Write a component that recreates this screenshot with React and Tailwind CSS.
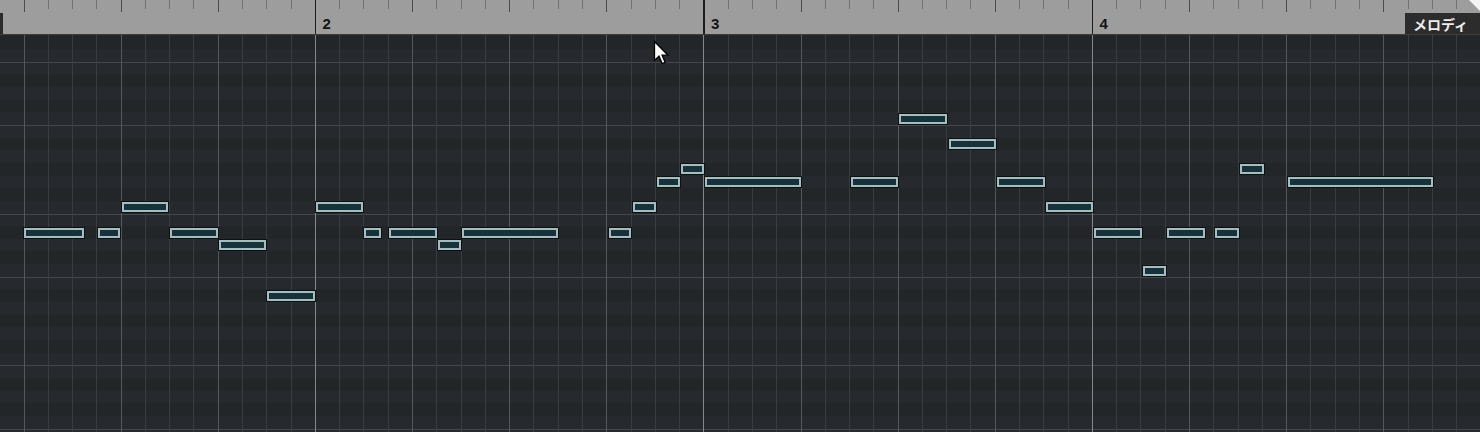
import React from "react";

const ROW = 12.667;
const FIRST = -13;
const COLS = 62;

// [start x, end x, row] — row 18 is C
const notes = [
  [24.3, 84, 15],
  [97.7, 120.3, 15],
  [122.3, 168.3, 13],
  [170, 218.3, 15],
  [219, 266, 16],
  [267.3, 315, 20],
  [316, 363, 13],
  [364, 380.5, 15],
  [389, 436.5, 15],
  [438, 460.5, 16],
  [462, 557.5, 15],
  [609, 631, 15],
  [633, 655.5, 13],
  [657, 679.5, 11],
  [681, 703.5, 10],
  [705, 800.5, 11],
  [851, 898, 11],
  [899, 946.5, 6],
  [949, 995.5, 8],
  [997, 1044.5, 11],
  [1046, 1093, 13],
  [1094, 1141.5, 15],
  [1143, 1166, 18],
  [1167, 1204.5, 15],
  [1215, 1238.5, 15],
  [1240, 1263.5, 10],
  [1288, 1433, 11],
];

const blackPitch = [1, 3, 6, 8, 10];
const octaveLines = [2, 7, 14, 19, 26, 31];
const cols = Array.from({ length: COLS }, (_, k) => k + FIRST);
const mod16 = (i) => ((i % 16) + 16) % 16;

function Ruler() {
  return (
    <div className="relative h-[35px] shrink-0 overflow-hidden border-b border-[#3c3c3c] bg-[#9d9d9d]">
      <div className="absolute inset-y-0 left-[-0.77px] flex">
        {cols.map((i) => {
          const m = mod16(i);
          if (m === 0) {
            return (
              <div key={i} className="flex w-[24.29px] shrink-0 items-start">
                <div className="h-[34px] w-[1.5px] shrink-0 bg-[#1b1b1b]" />
                <span className="ml-[6px] mt-[15px] text-[15px] font-bold leading-[17px] text-[#141414] [font-family:'Liberation_Sans',Arial,sans-serif]">
                  {i / 16 + 2}
                </span>
              </div>
            );
          }
          return (
            <div key={i} className="w-[24.29px] shrink-0">
              <div className={m % 4 === 0 ? "h-[12px] w-px bg-[#4c4c4c]" : "h-[9px] w-px bg-[#727272]"} />
            </div>
          );
        })}
      </div>
      <div className="absolute left-0 top-[13px] h-[21px] w-[3px] bg-[#2b2b2b]" />
      <div className="absolute right-0 top-[13px] flex h-[22px] w-[75px] items-center bg-[#2c2c2c] pl-[8px]">
        <span className="whitespace-nowrap text-[14px] font-bold leading-none text-[#ececec] [font-family:'Noto_Sans_CJK_JP',sans-serif]">
          メロディ
        </span>
      </div>
      <svg className="absolute right-0 top-0" width="11" height="11" viewBox="0 0 11 11">
        <polygon points="0,0 11,0 11,11" fill="#f4f4f4" />
      </svg>
    </div>
  );
}

function Grid() {
  const rows = Array.from({ length: 32 }, (_, r) => r);
  return (
    <div className="relative flex-1 overflow-hidden bg-[#24272b]">
      <div className="absolute inset-0 flex flex-col pt-[1.33px]">
        {rows.map((r) => {
          const pitch = (((18 - r) % 12) + 12) % 12;
          const black = blackPitch.includes(pitch);
          const line = octaveLines.includes(r);
          return (
            <div
              key={r}
              className={`h-[12.667px] shrink-0 ${black ? "bg-[#232629]" : "bg-[#26292d]"} ${line ? "shadow-[inset_0_1px_0_#45484c]" : ""}`}
            />
          );
        })}
      </div>
      <div className="absolute inset-y-0 left-[-0.77px] flex">
        {cols.map((i) => {
          const m = mod16(i);
          const tone = m === 0 ? "border-[#85888b]" : m % 4 === 0 ? "border-[#54575b]" : "border-[#393c40]";
          return <div key={i} className={`w-[24.29px] shrink-0 border-l ${tone}`} />;
        })}
      </div>
      {notes.map(([x1, x2, r], idx) => (
        <div
          key={idx}
          className="absolute h-[10px] border-2 border-[#a6bdc0] bg-[#17323a] shadow-[0_0_0_1px_#0e1113]"
          style={{ left: x1, width: x2 - x1, top: 1.33 + r * ROW + 1.4 }}
        />
      ))}
    </div>
  );
}

export default function App() {
  return (
    <div className="relative flex h-[432px] w-[1480px] flex-col overflow-hidden bg-[#24272b]">
      <Ruler />
      <Grid />
      <svg className="absolute left-[653px] top-[40px]" width="16" height="26" viewBox="0 0 16 26">
        <path
          d="M1.5 1.5 L1.5 20.5 L6 16.2 L9.2 23.6 L12.2 22.4 L9.1 15.2 L15 15.2 Z"
          fill="#ffffff"
          stroke="#000000"
          strokeWidth="1.3"
          strokeLinejoin="miter"
        />
      </svg>
    </div>
  );
}
